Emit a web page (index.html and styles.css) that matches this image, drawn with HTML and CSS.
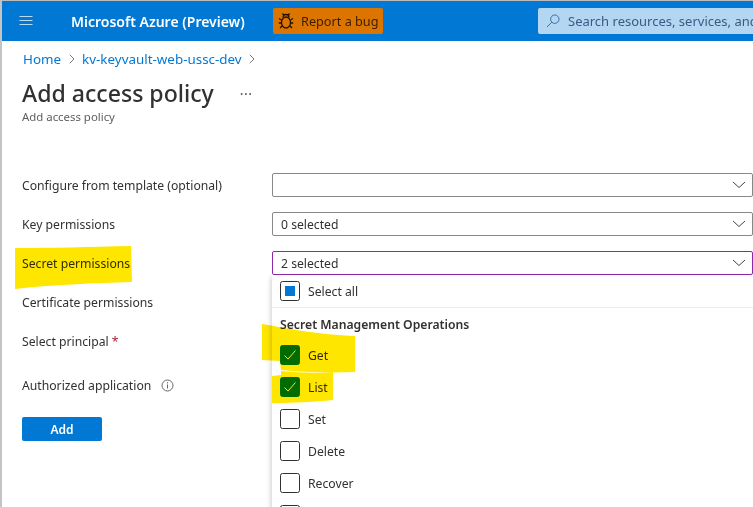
FILE: index.html
```html
<!DOCTYPE html>
<html>
<head>
    <title>Add access policy</title>
    <link rel="stylesheet" href="styles.css">
</head>
<body>
    <div class="frame">
        <header class="topbar">
            <svg class="menu-icon" width="16" height="12" viewBox="0 0 16 12"><path d="M1.500 1.500h13M1.500 5.500h13M1.500 9.500h13" stroke="#b9dcf5" stroke-width="1.200" fill="none"/></svg>
            <div class="brand">Microsoft Azure (Preview)</div>
            <div class="bug-button">
                <svg width="16" height="18" viewBox="0 0 16 18" fill="none" stroke="#241200" stroke-width="1.300"><ellipse cx="8" cy="10.500" rx="4.500" ry="5.500"/><path d="M5 5.500a3 3 0 0 1 6 0M4.500 1.500 6 3.500M11.500 1.500 10 3.500M3.500 8 1 6.500M12.500 8 15 6.500M3.200 11H.8M12.800 11h2.400M4 14l-2 2M12 14l2 2"/></svg>
                <span>Report a bug</span>
            </div>
            <div class="search">
                <svg width="14" height="14" viewBox="0 0 14 14" fill="none" stroke="#3f6ea3" stroke-width="1"><circle cx="8.800" cy="5.200" r="4.200"/><path d="M5.700 8.300 1 13"/></svg>
                <span>Search resources, services, and docs (G+/)</span>
            </div>
        </header>

        <main class="content">
            <nav class="crumbs">
                <a>Home</a>
                <svg class="crumb-sep" width="6" height="10" viewBox="0 0 6 10"><path d="M.8.800 5 5 .8 9.200" fill="none" stroke="#7a7a7a"/></svg>
                <a>kv-keyvault-web-ussc-dev</a>
                <svg class="crumb-sep" width="6" height="10" viewBox="0 0 6 10"><path d="M.8.800 5 5 .8 9.200" fill="none" stroke="#7a7a7a"/></svg>
            </nav>
            <div class="title-row">
                <h1>Add access policy</h1>
                <span class="more">&middot;&middot;&middot;</span>
            </div>
            <p class="subtitle">Add access policy</p>

            <form class="policy-form" onsubmit="return false;">
                <div class="row">
                    <label>Configure from template (optional)</label>
                    <div class="field"><span></span><svg class="chev" width="14" height="8" viewBox="0 0 14 8"><path d="M1 1l6 5.500L13 1" fill="none" stroke="#444"/></svg></div>
                </div>
                <div class="row">
                    <label>Key permissions</label>
                    <div class="field"><span>0 selected</span><svg class="chev" width="14" height="8" viewBox="0 0 14 8"><path d="M1 1l6 5.500L13 1" fill="none" stroke="#444"/></svg></div>
                </div>
                <div class="row">
                    <label>Secret permissions</label>
                    <div class="field open"><span>2 selected</span><svg class="chev" width="14" height="8" viewBox="0 0 14 8"><path d="M1 1l6 5.500L13 1" fill="none" stroke="#444"/></svg></div>
                    <!-- dropdown list for the open field -->
                    <div class="dropdown">
                        <div class="option select-all"><i class="box partial"></i>Select all</div>
                        <div class="group">Secret Management Operations</div>
                        <div class="option"><i class="box checked"><svg width="14" height="12" viewBox="0 0 14 12"><path d="M1.500 6.500 5 10l7.500-8.500" fill="none" stroke="#fff" stroke-width="1"/></svg></i>Get</div>
                        <div class="option"><i class="box checked"><svg width="14" height="12" viewBox="0 0 14 12"><path d="M1.500 6.500 5 10l7.500-8.500" fill="none" stroke="#fff" stroke-width="1"/></svg></i>List</div>
                        <div class="option"><i class="box"></i>Set</div>
                        <div class="option"><i class="box"></i>Delete</div>
                        <div class="option"><i class="box"></i>Recover</div>
                        <div class="option"><i class="box"></i></div>
                    </div>
                </div>
                <div class="row">
                    <label>Certificate permissions</label>
                </div>
                <div class="row tall">
                    <label>Select principal <b class="req">*</b></label>
                </div>
                <div class="row">
                    <label>Authorized application
                        <svg class="info" width="13" height="13" viewBox="0 0 13 13" fill="none" stroke="#666"><circle cx="6.500" cy="6.500" r="5.500"/><path d="M6.500 5.500v4M6.500 3.200v1.200"/></svg>
                    </label>
                </div>
                <button class="add-button">Add</button>
            </form>
        </main>

        <!-- marker scribbles drawn on top of the screenshot -->
        <svg class="marker" width="753" height="507" viewBox="0 0 753 507">
            <path d="M15 248 C50 248 90 247 131 246 L132 282 C95 283 50 285 15 289Z"/>
            <path d="M262 324 C285 328 320 335 355 336 L355 372 C330 373 300 372 281 370 L280 361 L262 360Z"/>
            <path d="M281 371 C300 373 320 373 333 372 L333 400 C315 402 295 403 272 403 L272 376 L281 375Z"/>
        </svg>
    </div>
</body>
</html>
```

FILE: styles.css
```css
html, body {
    margin: 0;
    height: 100%;
}
body {
    overflow: hidden;
    background-color: #fff;
    color: #323130;
    font-family: "Noto Sans", "Open Sans", Arial, sans-serif;
    font-size: 12.2px;
}
.frame {
    position: relative;
    height: 507px;
    box-sizing: border-box;
    border-top: 1px solid #bdbdbd;
    border-left: 2px solid #c4c4c4;
    overflow: hidden;
}

/* Top bar */
.topbar {
    display: flex;
    align-items: center;
    height: 40px;
    background-color: #0078d4;
}
.topbar > * {
    flex: none;
}
.menu-icon {
    margin-left: 16px;
}
.brand {
    width: 202px;
    margin-left: 37px;
    color: #fff;
    font-size: 14px;
    font-weight: 600;
    white-space: nowrap;
}
.bug-button {
    display: flex;
    align-items: center;
    gap: 7px;
    width: 110px;
    height: 26px;
    box-sizing: border-box;
    padding-left: 5px;
    background-color: #dc7500;
    border-radius: 2px;
    color: #3a1e00;
    font-size: 12.700px;
    white-space: nowrap;
}
.search {
    display: flex;
    align-items: center;
    gap: 8px;
    width: 400px;
    height: 26px;
    box-sizing: border-box;
    margin-left: 155px;
    padding-left: 8px;
    background-color: #b3d6f2;
    border-radius: 2px;
    color: #3d5a80;
    font-size: 13px;
    white-space: nowrap;
}

/* Page heading */
.content {
    padding-left: 20px;
}
.crumbs {
    display: flex;
    align-items: center;
    gap: 7.500px;
    height: 18px;
    padding-top: 9px;
    padding-left: 1px;
    color: #0078d4;
    font-size: 13.400px;
}
.title-row {
    display: flex;
    align-items: center;
    height: 36px;
    margin-top: 7px;
}
h1 {
    margin: 0;
    font-size: 23.100px;
    font-weight: 500;
    line-height: 36px;
    white-space: nowrap;
}
.more {
    margin-left: 26px;
    color: #555;
    font-size: 14px;
    letter-spacing: 0.5px;
}
.subtitle {
    margin: -2px 0 0;
    color: #605e5c;
    font-size: 11.400px;
    line-height: 16px;
}

/* Form */
.policy-form {
    margin-top: 48px;
}
.row {
    position: relative;
    display: flex;
    height: 39px;
}
.row.tall {
    height: 44px;
}
.row label {
    flex: none;
    width: 250px;
    line-height: 26px;
}
.req {
    color: #a4262c;
    font-weight: 400;
}
.info {
    margin-left: 6px;
    vertical-align: -2px;
}
.field {
    display: flex;
    align-items: center;
    justify-content: space-between;
    flex: none;
    width: 481px;
    height: 24px;
    box-sizing: border-box;
    padding: 0 6px 0 8px;
    border: 1px solid #8a8886;
    border-radius: 2px;
    background-color: #fff;
}
.field.open {
    border-color: #8e2aa8;
}
.add-button {
    display: block;
    width: 80px;
    height: 24px;
    margin-top: 5px;
    padding: 0;
    border: 0;
    border-radius: 2px;
    background-color: #0078d4;
    color: #fff;
    font-family: inherit;
    font-size: 12px;
    font-weight: 600;
}

/* Open dropdown */
.dropdown {
    position: absolute;
    top: 24px;
    left: 250px;
    width: 481px;
    height: 240px;
    background-color: #fff;
    box-shadow: -1px 2px 5px rgba(0, 0, 0, 0.2);
    z-index: 2;
}
.option {
    display: flex;
    align-items: center;
    gap: 8px;
    height: 32px;
    padding-left: 8px;
}
.select-all {
    border-bottom: 1px solid #edebe9;
}
.group {
    height: 31px;
    padding-left: 8px;
    line-height: 33px;
    font-weight: 600;
}
.box {
    display: flex;
    align-items: center;
    justify-content: center;
    flex: none;
    width: 20px;
    height: 20px;
    box-sizing: border-box;
    border: 1.300px solid #323130;
    border-radius: 2.500px;
}
.box.partial::before {
    content: "";
    width: 10px;
    height: 10px;
    background-color: #0078d4;
}
.box.checked {
    border-color: #0078d4;
    background-color: #0078d4;
}

/* Yellow marker over the picture */
.marker {
    position: absolute;
    top: -1px;
    left: -2px;
    z-index: 3;
    mix-blend-mode: multiply;
    pointer-events: none;
}
.marker path {
    fill: #ffe600;
}
```
